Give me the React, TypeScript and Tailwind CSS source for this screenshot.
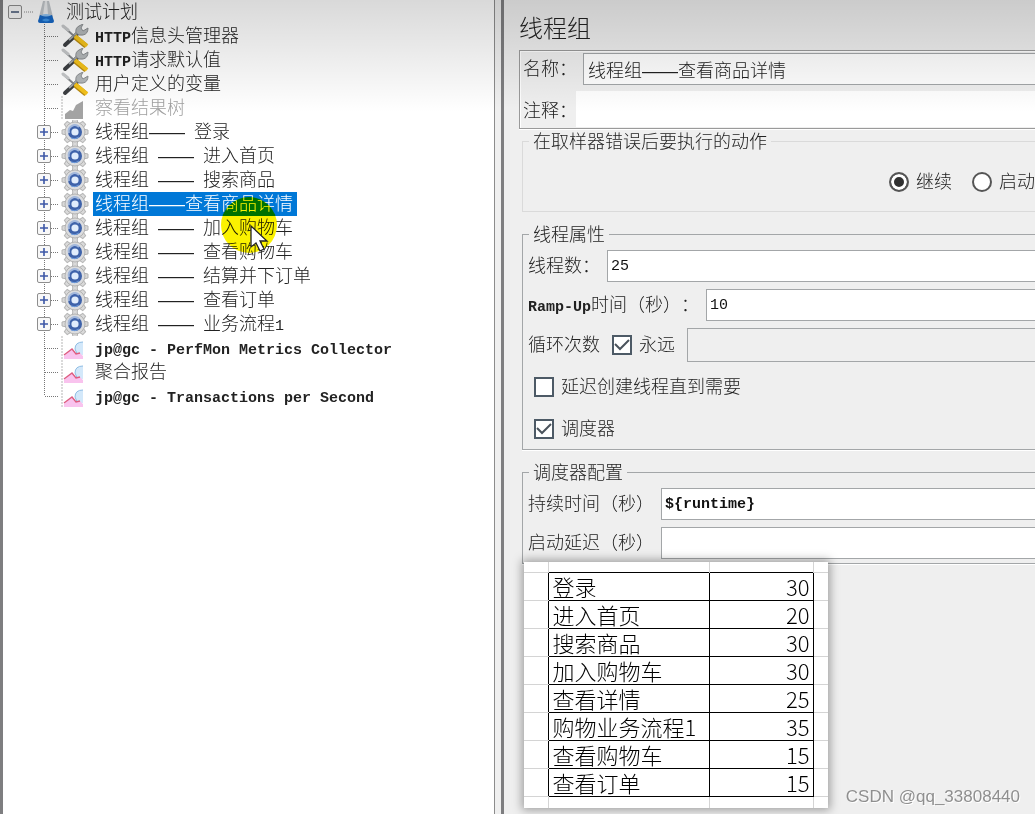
import React from "react";

type TreeItem = {
  label: string;
  icon: "tools" | "chartOff" | "gear" | "chart";
  selected?: boolean;
};

const treeItems: TreeItem[] = [
  { label: "HTTP信息头管理器", icon: "tools" },
  { label: "HTTP请求默认值", icon: "tools" },
  { label: "用户定义的变量", icon: "tools" },
  { label: "察看结果树", icon: "chartOff" },
  { label: "线程组—— 登录", icon: "gear" },
  { label: "线程组 —— 进入首页", icon: "gear" },
  { label: "线程组 —— 搜索商品", icon: "gear" },
  { label: "线程组——查看商品详情", icon: "gear", selected: true },
  { label: "线程组 —— 加入购物车", icon: "gear" },
  { label: "线程组 —— 查看购物车", icon: "gear" },
  { label: "线程组 —— 结算并下订单", icon: "gear" },
  { label: "线程组 —— 查看订单", icon: "gear" },
  { label: "线程组 —— 业务流程1", icon: "gear" },
  { label: "jp@gc - PerfMon Metrics Collector", icon: "chart" },
  { label: "聚合报告", icon: "chart" },
  { label: "jp@gc - Transactions per Second", icon: "chart" },
];

const sheetRows: [string, number][] = [
  ["登录", 30],
  ["进入首页", 20],
  ["搜索商品", 30],
  ["加入购物车", 30],
  ["查看详情", 25],
  ["购物业务流程1", 35],
  ["查看购物车", 15],
  ["查看订单", 15],
];

// letters look bold in this face, digits do not
const weightOf = (text: string) => (/^\d+$/.test(text) ? "font-normal" : "font-bold");

// Latin runs are set smaller so that two of them take one Chinese character
const Mixed: React.FC<{ text: string }> = ({ text }) => {
  return (
    <>
      {text.split(/([\x20-\x7e]+)/).map((part, i) =>
        i % 2 ? (
          <span
            key={i}
            className={`font-['Liberation_Mono',monospace] text-[15px] leading-none text-[#222] ${weightOf(part)}`}
          >
            {part}
          </span>
        ) : (
          part
        )
      )}
    </>
  );
};

const Flask: React.FC = () => (
  <svg width="20" height="24" viewBox="0 0 20 24" aria-hidden="true">
    <path d="M7 1h6l4 16H3z" fill="#c3c8cc" />
    <path d="M9 1h2l1 14H7z" fill="#eceef0" />
    <path d="M4 15q6 2 12 0l2 6q0 2-2 2H4q-2 0-2-2z" fill="#1668c6" />
    <path d="M5 15q5-2 10 0-5 3-10 0z" fill="#8cc0f0" />
    <path d="M6 20q4-3 8 0-4 3-8 0z" fill="#3f97ea" />
  </svg>
);

const Tools: React.FC = () => (
  <svg width="28" height="24" viewBox="0 0 28 24" aria-hidden="true">
    <path d="M4 21L17 9" stroke="#3c3f42" strokeWidth="4" strokeLinecap="round" />
    <path d="M8 16L18 7" stroke="#a4a8ab" strokeWidth="2" />
    <path d="M15 9q-1-5 3-7l4-2-2 4 2 3 5-3q0 6-5 7-4 1-7-2z" fill="#b4b8ba" stroke="#8b8e91" strokeWidth="1" />
    <path d="M3 3l11 10" stroke="#85888b" strokeWidth="2" strokeLinecap="round" />
    <path d="M2 2l5 4" stroke="#c6c8ca" strokeWidth="3" strokeLinecap="round" />
    <path d="M14 13l11 9" stroke="#b98a10" strokeWidth="5" />
    <path d="M14 12l12 10" stroke="#f5c31c" strokeWidth="4" />
  </svg>
);

const Gear: React.FC = () => (
  <svg width="28" height="24" viewBox="0 0 28 24" aria-hidden="true">
    <g fill="#dadada" stroke="#b4b4b4" strokeWidth="1">
      {[0, 45, 90, 135, 180, 225, 270, 315].map((deg) => (
        <path key={deg} d="M11 4L12-1h4L17 4z" transform={`rotate(${deg} 14 12)`} />
      ))}
      <circle cx="14" cy="12" r="10" />
    </g>
    <circle cx="14" cy="12" r="9" fill="#dcdddf" />
    <circle cx="14" cy="12" r="7" fill="#3f63aa" />
    <path d="M8 13a6 6 0 0 1 10-6" fill="none" stroke="#a3b8dc" strokeWidth="2" />
    <circle cx="14" cy="12" r="3.6" fill="#e0ecfc" />
    <path d="M10 18q4 2 8-1" fill="none" stroke="#6f9cdc" strokeWidth="1" />
  </svg>
);

const Chart: React.FC<{ off?: boolean }> = ({ off }) => (
  <svg width="28" height="24" viewBox="0 0 28 24" aria-hidden="true">
    <path d="M1 0v24" stroke="#b5b5b5" strokeWidth="1" strokeDasharray="2 1" />
    {off ? (
      <path d="M4 23v-5l5-4 3 1 3-6 7-4v18z" fill="#a3a3a3" />
    ) : (
      <>
        <path d="M22 6q-8 0-8 7 1 6 8 6z" fill="#d3e8fa" />
        <path d="M22 6q-8 0-8 7 1 5 5 6" fill="none" stroke="#8fbde4" strokeWidth="1" />
        <path d="M3 23v-3l8-7 4 5 4-1 3 3v3z" fill="#f9c3ee" />
        <path d="M3 19l8-6 4 5 4-1" fill="none" stroke="#dd5c80" strokeWidth="1.4" />
      </>
    )}
  </svg>
);

const Expander: React.FC<{ open?: boolean }> = ({ open }) => (
  <button
    type="button"
    aria-label={open ? "Collapse" : "Expand"}
    className="relative flex h-[14px] w-[14px] items-center justify-center rounded-[2px] border border-[#8e8e8e] bg-[#f8f8f8]"
  >
    <svg width="8" height="8" viewBox="0 0 8 8" aria-hidden="true">
      <path d={open ? "M0 4h8" : "M0 4h8M4 0v8"} stroke={open ? "#4a5a78" : "#3c57a6"} strokeWidth="1.6" />
    </svg>
  </button>
);

const TreeRow: React.FC<{ item: TreeItem; last: boolean }> = ({ item, last }) => {
  const off = item.icon === "chartOff";
  return (
    <li className="flex h-6 items-center pl-[34px]">
      <span className="grid items-center">
        <svg width="24" height="24" viewBox="0 0 24 24" className="col-start-1 row-start-1" aria-hidden="true">
          <path
            d={last ? "M7.5 0v12M8 12.5h14" : "M7.5 0v24M8 12.5h14"}
            fill="none"
            stroke="#777"
            strokeDasharray="1 1"
          />
        </svg>
        {item.icon === "gear" && (
          <span className="col-start-1 row-start-1">
            <Expander />
          </span>
        )}
      </span>
      {item.icon === "tools" && <Tools />}
      {item.icon === "gear" && <Gear />}
      {item.icon === "chart" && <Chart />}
      {off && <Chart off />}
      <span
        className={`ml-1 whitespace-nowrap pl-0.5 pr-1 ${
          item.selected ? "bg-[#0078d7] text-white" : off ? "text-[#a0a0a0]" : "text-[#222]"
        }`}
      >
        <Mixed text={item.label} />
      </span>
    </li>
  );
};

const CheckBox: React.FC<{ label: string; checked?: boolean }> = ({ label, checked }) => (
  <label className="flex h-6 items-center gap-[7px]">
    <span className="grid">
      <input
        type="checkbox"
        defaultChecked={checked}
        className="peer col-start-1 row-start-1 h-5 w-5 appearance-none border-2 border-[#4d5a66] bg-white"
      />
      <svg
        width="20"
        height="20"
        viewBox="0 0 20 20"
        className="pointer-events-none invisible col-start-1 row-start-1 peer-checked:visible"
        aria-hidden="true"
      >
        <path d="M3 9l5 5 9-9" fill="none" stroke="#4a535c" strokeWidth="2" />
      </svg>
    </span>
    {label}
  </label>
);

const Radio: React.FC<{ label: string; checked?: boolean }> = ({ label, checked }) => (
  <label className="flex h-6 items-center gap-[7px]">
    <input
      type="radio"
      name="onError"
      defaultChecked={checked}
      className="h-5 w-5 appearance-none rounded-full border-2 border-[#555] bg-white checked:bg-[#303030] checked:shadow-[inset_0_0_0_3px_white]"
    />
    {label}
  </label>
);

type FieldProps = { id: string; label: string; value?: string };

const Field: React.FC<FieldProps> = ({ id, label, value = "" }) => (
  <div className="flex items-center gap-[7px]">
    <label htmlFor={id} className="shrink-0">
      <Mixed text={label} />
    </label>
    <input
      id={id}
      type="text"
      defaultValue={value}
      className={`h-8 min-w-0 flex-1 border border-r-0 border-[#a3a6a8] bg-white px-[3px] font-['Liberation_Mono',monospace] text-[15px] text-[#111] outline-0 ${weightOf(value)}`}
    />
  </div>
);

type GroupProps = { title: string; className: string; children: React.ReactNode };

const Group: React.FC<GroupProps> = ({ title, className, children }) => (
  <fieldset className={`ml-[18px] border border-r-0 ${className}`}>
    <legend className="ml-1.5 px-1 pt-0.5">{title}</legend>
    {children}
  </fieldset>
);

const Sheet: React.FC = () => (
  <div className="relative -mt-0.5 ml-5 w-max bg-white shadow-[0_0_9px_2px_rgba(0,0,0,0.35)]">
    <table className="border-collapse font-['Noto_Sans_CJK_SC',sans-serif] text-[22px] leading-[27px] text-black">
      <tbody>
        <tr className="h-[10px]">
          <td className="w-6 border-r border-[#d4d4d4]" />
          <td className="w-[161px] border-r border-[#d4d4d4]" />
          <td className="w-[104px] border-r border-[#d4d4d4]" />
          <td className="w-[15px]" />
        </tr>
        {sheetRows.map(([name, count]) => (
          <tr key={name} className="h-7">
            <td className="border-y border-[#d4d4d4]" />
            <td className="border border-black pl-1">{name}</td>
            <td className="border border-black pr-[3px] text-right">{count}</td>
            <td className="border-y border-[#d4d4d4]" />
          </tr>
        ))}
        <tr className="h-3">
          <td className="border-r border-[#d4d4d4]" />
          <td className="border-r border-[#d4d4d4]" />
          <td className="border-r border-[#d4d4d4]" />
          <td />
        </tr>
      </tbody>
    </table>
  </div>
);

const App: React.FC = () => {
  return (
    <div className="relative grid min-h-screen grid-cols-[494fr_541fr] overflow-hidden bg-[#efefef] font-['Liberation_Sans','Noto_Sans_CJK_SC',sans-serif] text-lg leading-6 font-light text-[#222] [text-spacing-trim:space-all]">
      <nav className="relative min-w-0 border-l-[3px] border-[#7e7e80] bg-white">
        <div className="flex h-6 items-center pl-[5px]">
          <Expander open />
          <svg width="12" height="2" viewBox="0 0 12 2" aria-hidden="true">
            <path d="M2 1h10" stroke="#8a8a8a" strokeDasharray="1 1" />
          </svg>
          <span className="ml-0.5">
            <Flask />
          </span>
          <span className="ml-[10px]">测试计划</span>
        </div>
        <ul>
          {treeItems.map((item, i) => (
            <TreeRow key={item.label} item={item} last={i === treeItems.length - 1} />
          ))}
        </ul>
        {/* click highlight and pointer */}
        <div className="pointer-events-none absolute top-[197px] left-[218px] h-14 w-14 rounded-full bg-[#fbf200] mix-blend-multiply" />
        <svg
          width="20"
          height="28"
          viewBox="0 0 20 28"
          className="pointer-events-none absolute top-[225px] left-[247px]"
          aria-hidden="true"
        >
          <path d="M1 1v21l5-4 4 8 4-2-4-8h7z" fill="#fff" stroke="#222" strokeWidth="1.3" />
        </svg>
      </nav>

      <main className="flex min-w-0">
        <div className="w-[10px] shrink-0 border-r-[3px] border-l border-r-[#7e7e80] border-l-[#8c8c8c]" />
        <form className="min-w-0 flex-1">
          <h1 className="pt-[13px] pb-[5px] pl-[15px] text-2xl leading-8">线程组</h1>

          <div className="ml-[15px] border border-r-0 border-[#9a9a9a] pt-0.5 pb-px shadow-[inset_1px_1px_0_white,0_1px_0_white]">
            <div className="flex items-center pl-[3px]">
              <label htmlFor="name" className="w-[60px] shrink-0 whitespace-nowrap">
                名称：
              </label>
              <input
                id="name"
                type="text"
                defaultValue="线程组——查看商品详情"
                className="h-8 min-w-0 flex-1 border border-r-0 border-[#a3a6a8] bg-white px-1 outline-0"
              />
            </div>
            <div className="mt-1.5 flex items-center pl-[3px]">
              <label htmlFor="comment" className="w-[53px] shrink-0 pt-1 whitespace-nowrap">
                注释：
              </label>
              <input id="comment" type="text" className="h-9 min-w-0 flex-1 bg-white px-1 outline-0" />
            </div>
          </div>

          <Group title="在取样器错误后要执行的动作" className="-mt-px border-[#dadada]">
            <div className="flex justify-end gap-5 pt-4 pb-[17px] whitespace-nowrap">
              <Radio label="继续" checked />
              <Radio label="启动" />
            </div>
          </Group>

          <Group title="线程属性" className="mt-[9px] border-[#a3a6a8] shadow-[0_1px_0_white]">
            <div className="flex flex-col gap-[7px] pt-[3px] pl-[5px]">
              <Field id="threads" label="线程数：" value="25" />
              <Field id="rampUp" label="Ramp-Up时间（秒）：" value="10" />
              <div className="flex items-center">
                <label htmlFor="loops" className="mr-3 shrink-0">
                  循环次数
                </label>
                <CheckBox label="永远" checked />
                <input
                  id="loops"
                  type="text"
                  disabled
                  className="ml-3 h-[34px] min-w-0 flex-1 border border-r-0 border-[#a3a6a8] bg-[#efefef]"
                />
              </div>
            </div>
            <div className="flex flex-col gap-[18px] pt-[13px] pb-2 pl-[11px]">
              <CheckBox label="延迟创建线程直到需要" />
              <CheckBox label="调度器" checked />
            </div>
          </Group>

          <Group title="调度器配置" className="mt-[9px] border-[#a3a6a8] shadow-[0_1px_0_white]">
            <div className="flex flex-col gap-[7px] pt-[3px] pb-1 pl-[5px]">
              <Field id="duration" label="持续时间（秒）" value="${runtime}" />
              <Field id="delay" label="启动延迟（秒）" />
            </div>
          </Group>

          <Sheet />
        </form>
      </main>

      {/* shade along the top edge of the window */}
      <div className="pointer-events-none absolute inset-x-0 top-0 h-28 bg-linear-to-b from-black/15 to-transparent" />
      <p className="absolute right-[15px] bottom-[5px] text-[17px] text-[#8f8f8f] [text-shadow:1px_1px_0_white]">
        CSDN @qq_33808440
      </p>
    </div>
  );
};

export default App;
